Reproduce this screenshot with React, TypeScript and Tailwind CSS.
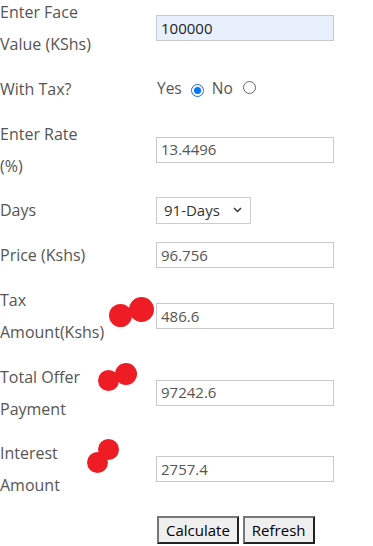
import React from 'react';

type Row = {
  label: string[];
  value?: string;
  kind: 'input' | 'radio' | 'select';
  autofill?: boolean;
};

const ROWS: Row[] = [
  { label: ['Enter Face', 'Value (KShs)'], value: '100000', kind: 'input', autofill: true },
  { label: ['With Tax?'], kind: 'radio' },
  { label: ['Enter Rate', '(%)'], value: '13.4496', kind: 'input' },
  { label: ['Days'], value: '91-Days', kind: 'select' },
  { label: ['Price (Kshs)'], value: '96.756', kind: 'input' },
  { label: ['Tax', 'Amount(Kshs)'], value: '486.6', kind: 'input' },
  { label: ['Total Offer', 'Payment'], value: '97242.6', kind: 'input' },
  { label: ['Interest', 'Amount'], value: '2757.4', kind: 'input' },
];

// red marker blobs drawn over the form
const DOTS = [
  { x: 120.5, y: 315, r: 11.5 },
  { x: 141, y: 309.5, r: 12.5 },
  { x: 108, y: 380, r: 10.5 },
  { x: 126, y: 374, r: 11 },
  { x: 97.5, y: 462, r: 10.5 },
  { x: 108, y: 449.5, r: 10.5 },
];

function Radio({ checked }: { checked: boolean }) {
  return checked ? (
    <span className="inline-flex h-[13px] w-[13px] items-center justify-center rounded-full border-[1.5px] border-[#0075ff] bg-white">
      <span className="h-[7px] w-[7px] rounded-full bg-[#0075ff]" />
    </span>
  ) : (
    <span className="inline-block h-[13px] w-[13px] rounded-full border border-[#666] bg-white" />
  );
}

function Field({ row }: { row: Row }) {
  if (row.kind === 'radio') {
    return (
      <div className="flex items-center pl-[1px] text-[15.5px]">
        <span>Yes</span>
        <span className="ml-[9px]"><Radio checked /></span>
        <span className="ml-[8px]">No</span>
        <span className="ml-[10px]"><Radio checked={false} /></span>
      </div>
    );
  }
  if (row.kind === 'select') {
    return (
      <div className="flex h-[27px] w-[95px] items-center justify-between border border-[#ccc] bg-white pl-[7px] pr-[8px] text-[15px] text-[#333]">
        <span>{row.value}</span>
        <svg width="9" height="6" viewBox="0 0 9 6" fill="none">
          <path d="M1 1l3.5 3.5L8 1" stroke="#333" strokeWidth="1.4" />
        </svg>
      </div>
    );
  }
  return (
    <div
      className={`flex h-[26px] w-[178px] items-center border border-[#c8c8c8] px-[4px] text-[15px] ${
        row.autofill ? 'bg-[#e8f0fe] text-[#222]' : 'bg-white text-[#555]'
      }`}
    >
      {row.value}
    </div>
  );
}

export default function App() {
  return (
    <div
      className="relative h-[546px] w-[373px] overflow-hidden bg-white text-[16px] text-[#555]"
      style={{ fontFamily: '"Open Sans", "Liberation Sans", sans-serif' }}
    >
      <div className="mt-[-4px] flex flex-col gap-[12.75px]">
        {ROWS.map((row, i) => (
          <div key={i} className="grid grid-cols-[156px_1fr] items-center">
            <div className="leading-8">
              {row.label.map((l) => (
                <div key={l}>{l}</div>
              ))}
            </div>
            <Field row={row} />
          </div>
        ))}

        <div className="grid h-8 grid-cols-[156px_1fr] items-center">
          <div />
          <div className="flex gap-[4px] pl-[1px] text-[15px] text-black">
            <button className="h-[28px] border-2 border-b-[#222] border-l-[#777] border-r-[#222] border-t-[#777] bg-[#efefef] px-[7px] leading-none">
              Calculate
            </button>
            <button className="h-[28px] border-2 border-b-[#222] border-l-[#777] border-r-[#222] border-t-[#777] bg-[#efefef] px-[7px] leading-none">
              Refresh
            </button>
          </div>
        </div>
      </div>

      {DOTS.map((d, i) => (
        <div
          key={i}
          className="absolute rounded-full bg-[#ee1c25]"
          style={{ left: d.x - d.r, top: d.y - d.r, width: d.r * 2, height: d.r * 2 }}
        />
      ))}
    </div>
  );
}
